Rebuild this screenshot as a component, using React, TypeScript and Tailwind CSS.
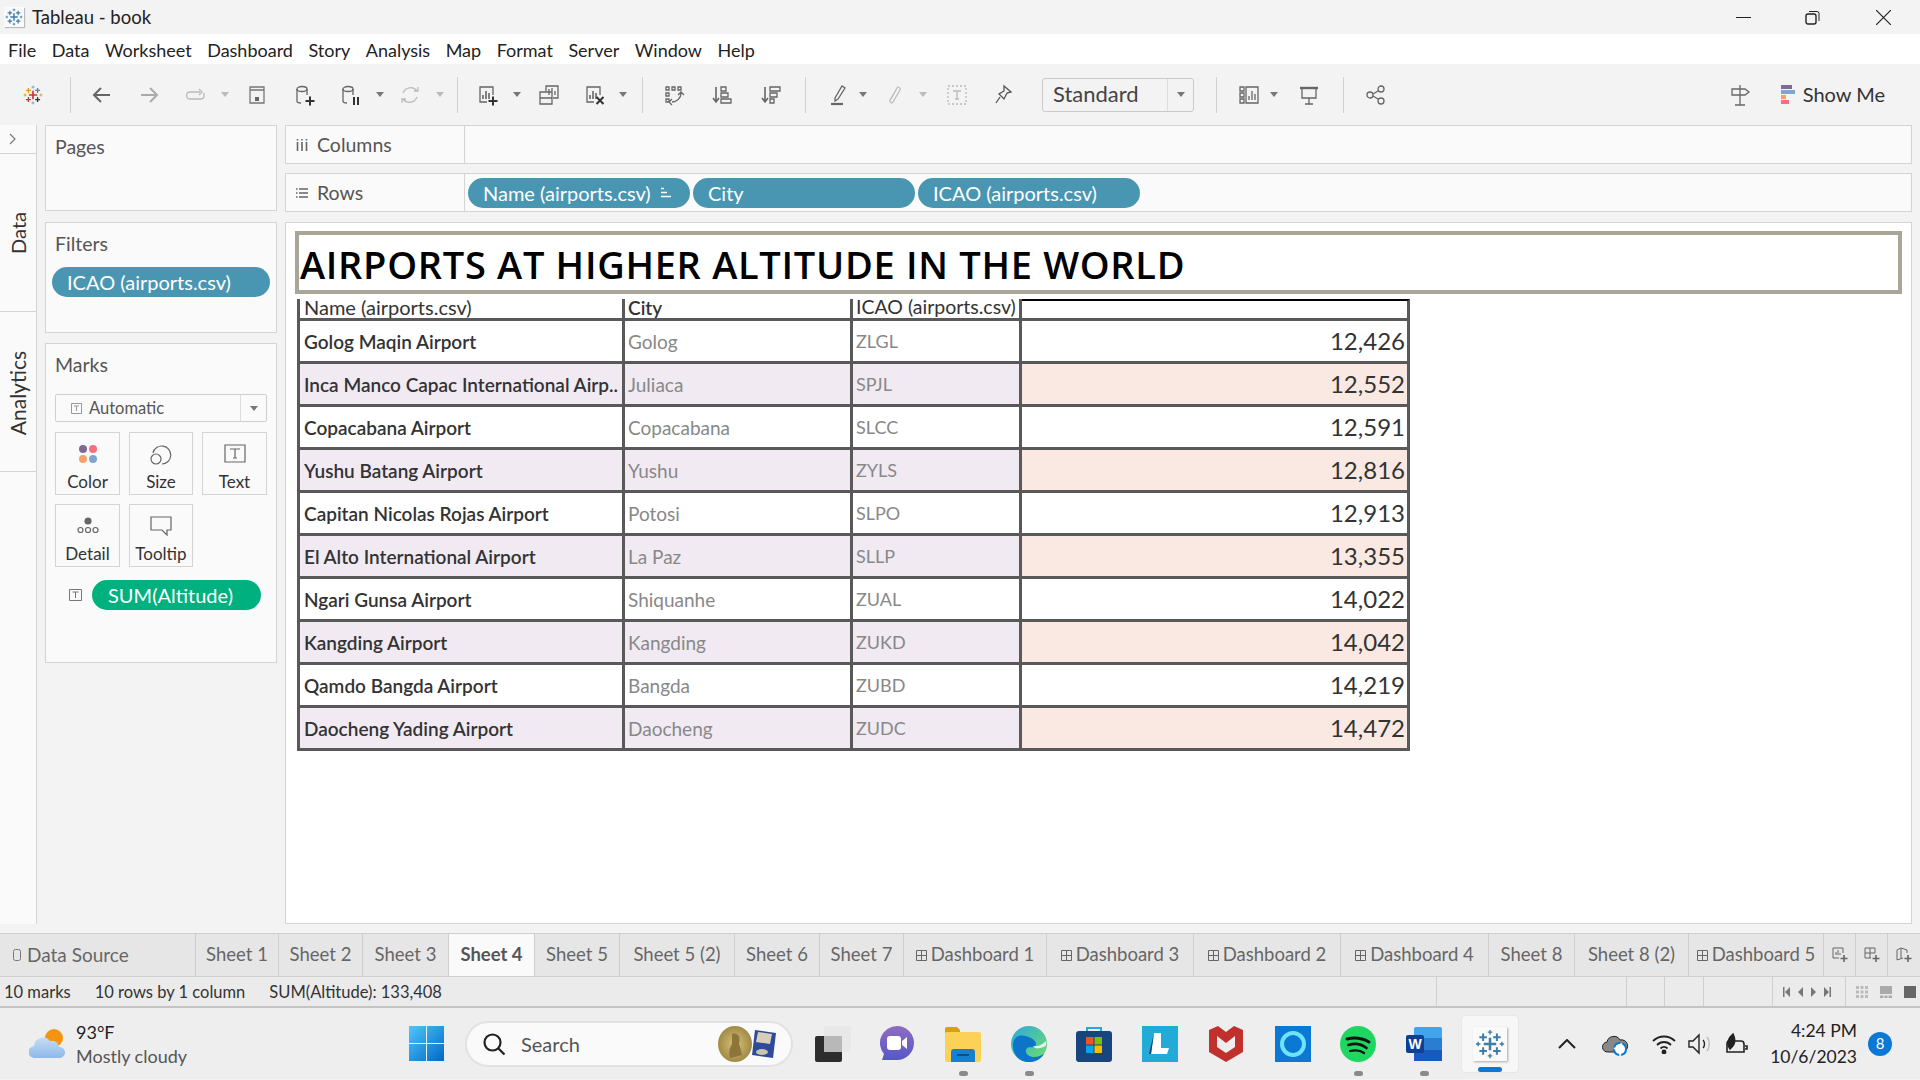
import React from "react";

const S = ({ w = 22, h = 22, v = "0 0 22 22", c = "", children }: any) => (
  <svg width={w} height={h} viewBox={v} fill="none" stroke="#666" strokeWidth={1.3} className={"shrink-0 " + c}>{children}</svg>
);
const Caret = ({ c = "", light = false }: any) => (
  <svg width={8} height={5} viewBox="0 0 8 5" className={"shrink-0 " + c}><path d="M0 0h8L4 5z" fill={light ? "#bbb" : "#777"} /></svg>
);
const Div = ({ c = "" }: any) => <div className={"w-px h-[36px] bg-[#d0d0d0] shrink-0 " + c} />;
const Plus = ({ x, y, s, col, w = 1.6 }: any) => (
  <path d={`M${x - s} ${y}H${x + s}M${x} ${y - s}V${y + s}`} stroke={col} strokeWidth={w} fill="none" />
);
const Logo = ({ size = 22, colors }: any) => {
  const k = colors || ["#3f7ca8", "#3f7ca8", "#3f7ca8", "#3f7ca8", "#3f7ca8", "#3f7ca8", "#3f7ca8"];
  return (
    <svg width={size} height={size} viewBox="0 0 24 24" className="shrink-0">
      <Plus x={12} y={12} s={5} col={k[0]} w={2} />
      <Plus x={6.5} y={6.5} s={3} col={k[1]} />
      <Plus x={17.5} y={6.5} s={3} col={k[2]} />
      <Plus x={6.5} y={17.5} s={3} col={k[3]} />
      <Plus x={17.5} y={17.5} s={3} col={k[4]} />
      <Plus x={12} y={2.5} s={1.8} col={k[5]} w={1.1} />
      <Plus x={12} y={21.5} s={1.8} col={k[5]} w={1.1} />
      <Plus x={2.5} y={12} s={1.8} col={k[6]} w={1.1} />
      <Plus x={21.5} y={12} s={1.8} col={k[6]} w={1.1} />
    </svg>
  );
};
const Cyl = ({ children }: any) => (
  <S>
    <ellipse cx="8" cy="5" rx="5" ry="2.5" />
    <path d="M3 5v12c0 1.2 2 2 4 2M13 5v6" />
    {children}
  </S>
);
const Chart = ({ children }: any) => (
  <S>
    <path d="M10 18H3V3h13v8" />
    <path d="M6 15v-4M9 15V7M12 15v-6" strokeWidth={1.6} />
    {children}
  </S>
);

const menu = ["File", "Data", "Worksheet", "Dashboard", "Story", "Analysis", "Map", "Format", "Server", "Window", "Help"];

const Toolbar = () => (
  <div className="h-[61px] flex items-center bg-[#f3f3f3] pl-[23px] pr-[35px] shrink-0">
    <Logo size={20} colors={["#c9343a", "#e8962b", "#5b879b", "#c9343a", "#333333", "#7b9cc4", "#e8962b"]} />
    <Div c="ml-[27px]" />
    <S c="ml-[20px]"><path d="M19 11H4M10 4l-7 7 7 7" strokeWidth={2} /></S>
    <S c="ml-[25px]"><path d="M3 11h15M12 4l7 7-7 7" stroke="#aaa" strokeWidth={2} /></S>
    <S c="ml-[25px]"><path d="M15 8H5a3 3 0 0 0 0 7h11a3 3 0 0 0 3-3V9M14 5l3 3-3 3" stroke="#bbb" /></S>
    <Caret c="ml-[14px]" light />
    <S c="ml-[17px]"><path d="M4 3h14v16H4zM4 6h14" stroke="#777" /><rect x="9" y="13" width="4" height="4" fill="#666" stroke="none" /></S>
    <div className="ml-[26px]" />
    <Cyl><Plus x={16} y={17} s={4.5} col="#333" w={2} /></Cyl>
    <div className="ml-[24px]" />
    <Cyl><path d="M14 13v8M18 13v8" stroke="#333" strokeWidth={2} /></Cyl>
    <Caret c="ml-[14px]" />
    <S c="ml-[15px]"><path d="M4 9a8 8 0 0 1 14-2M18 13a8 8 0 0 1-14 2M15 7h4V3M7 15H3v4" stroke="#bbb" /></S>
    <Caret c="ml-[15px]" light />
    <Div c="ml-[13px]" />
    <div className="ml-[19px]" />
    <Chart><Plus x={16} y={17} s={4.5} col="#333" w={2} /></Chart>
    <Caret c="ml-[14px]" />
    <S c="ml-[17px]"><path d="M8 7V2h12v12h-5" /><path d="M2 8h12v12H2zM2 14h12M11 11V5M14 11V4M17 11V7" /></S>
    <div className="ml-[24px]" />
    <Chart><path d="M12.5 13l7 7M19.5 13l-7 7" stroke="#333" strokeWidth={2} /></Chart>
    <Caret c="ml-[13px]" />
    <Div c="ml-[15px]" />
    <S c="ml-[20px]"><path d="M3 3h3v3H3zM9 3h3v3H9zM15 3h3v3h-3zM3 9h3v3H3zM3 15h3v3H3zM18 9c0 5-4 9-9 9M15 11l3-3 3 3M9 15l-3 3 3 3" /></S>
    <S c="ml-[26px]"><path d="M5 3v15M2 14l3 4 3-4" strokeWidth={1.6} /><path d="M10 3h5v4h-5zM10 9h7v4h-7zM10 15h10v4H10z" /></S>
    <S c="ml-[27px]"><path d="M5 3v15M2 14l3 4 3-4" strokeWidth={1.6} /><path d="M10 3h10v4H10zM10 9h7v4h-7zM10 15h4v4h-4z" /></S>
    <Div c="ml-[23px]" />
    <S c="ml-[21px]"><path d="M8 14l7-12 3 2-7 11-3 2zM5 20h11" /><path d="M4 20h12" strokeWidth={2.2} /></S>
    <Caret c="ml-[10px]" />
    <S c="ml-[17px]"><path d="M7 15l6-11c1-2 4 0 3 2l-7 12c-1 2-4 0-3-2l6-10" stroke="#bbb" /></S>
    <Caret c="ml-[13px]" light />
    <S c="ml-[19px]"><path d="M2 2h18v18H2z" stroke="#bbb" strokeDasharray="2 2" /><path d="M7 7h8M11 7v8M9 15h4" stroke="#bbb" /></S>
    <S c="ml-[24px]"><path d="M12 2l7 6-4 1-3 6-5-5 5-3zM8 13l-4 6" stroke="#555" /></S>
    <div className="ml-[28px] w-[152px] h-[34px] border border-[#c9c9c9] rounded-[3px] flex items-center shrink-0">
      <span className="flex-1 pl-[10px] pb-[2px] text-[22px] text-[#444]">Standard</span>
      <div className="w-[26px] h-full border-l border-[#dcdcdc] flex items-center justify-center"><Caret /></div>
    </div>
    <Div c="ml-[22px]" />
    <S c="ml-[21px]"><path d="M2 3h4v4H2zM2 9h4v4H2zM2 15h4v4H2zM8 3h12v16H8zM11 16v-4M14 16V7M17 16v-6" /></S>
    <Caret c="ml-[10px]" />
    <S c="ml-[20px]"><path d="M2 4h18" strokeWidth={2.4} /><path d="M4 4v10h14V4M11 14v6M7 20h8" /></S>
    <Div c="ml-[23px]" />
    <S c="ml-[21px]"><circle cx="5" cy="11" r="3" /><circle cx="16" cy="5" r="3" /><circle cx="16" cy="17" r="3" /><path d="M8 10l5-3M8 12l5 3" /></S>
    <S c="ml-auto"><path d="M11 1v20M6 21h10M3 5h13l4 3-4 3H3z" /></S>
    <svg width="14" height="20" viewBox="0 0 14 20" className="ml-[30px] shrink-0">
      <rect width="11" height="4" fill="#7e6a95" /><rect y="5" width="14" height="4" fill="#7fa4ce" /><rect y="10" width="5" height="4" fill="#f2a26d" /><rect y="15" width="8" height="4" fill="#f4707e" />
    </svg>
    <span className="ml-[8px] pb-[2px] text-[20px] text-[#333]">Show Me</span>
  </div>
);

const Pill = ({ text, c = "", children }: any) => (
  <div className={"h-[30px] rounded-[15px] bg-[#4996b2] text-white text-[20px] flex items-center pl-[15px] shrink-0 " + c}>
    <span>{text}</span>{children}
  </div>
);

const Rail = () => (
  <div className="w-[37px] shrink-0 bg-[#fafafa] border-r border-[#d4d4d4] flex flex-col">
    <div className="h-[29px] border-b border-[#d4d4d4] flex items-center justify-center pr-[10px]">
      <svg width="8" height="12" viewBox="0 0 8 12" fill="none" stroke="#777" strokeWidth="1.2"><path d="M1 1l5 5-5 5" /></svg>
    </div>
    <div className="h-[158px] border-b border-[#d4d4d4] flex items-center justify-center">
      <span className="[writing-mode:vertical-rl] rotate-180 text-[20px] text-[#333]">Data</span>
    </div>
    <div className="h-[160px] pt-[4px] border-b border-[#d4d4d4] flex items-center justify-center">
      <span className="[writing-mode:vertical-rl] rotate-180 text-[21px] text-[#333]">Analytics</span>
    </div>
  </div>
);

const Card = ({ label, c = "", children }: any) => (
  <div className={"h-[63px] border border-[#d4d4d4] flex flex-col items-center pt-[7px] text-[17px] text-[#333] " + c}>
    <div className="h-[30px] flex items-center">{children}</div>
    <span className="mt-[2px]">{label}</span>
  </div>
);

const Left = () => (
  <div className="w-[232px] ml-[8px] shrink-0 flex flex-col text-[19.5px] text-[#555]">
    <div className="h-[86px] border border-[#d4d4d4] bg-[#fafafa] pl-[9px] pt-[6px]">Pages</div>
    <div className="h-[111px] mt-[11px] border border-[#d4d4d4] bg-[#fafafa] pt-[6px]">
      <div className="pl-[9px]">Filters</div>
      <Pill text="ICAO (airports.csv)" c="mx-[6px] mt-[9px]" />
    </div>
    <div className="h-[320px] mt-[10px] border border-[#d4d4d4] bg-[#fafafa] pt-[6px] px-[9px]">
      <div>Marks</div>
      <div className="mt-[15px] h-[28px] border border-[#cfcfcf] rounded-[2px] flex items-center text-[16.5px] text-[#555]">
        <div className="flex-1 flex items-center pl-[15px] gap-[7px]">
          <svg width="11" height="11" viewBox="0 0 11 11" fill="none" stroke="#999"><path d="M.5.5h10v10H.5zM3 3h5M5.5 3v5" /></svg>
          <span>Automatic</span>
        </div>
        <div className="w-[26px] h-full border-l border-[#dcdcdc] flex items-center justify-center"><Caret /></div>
      </div>
      <div className="mt-[10px] grid grid-cols-[65px_64px_65px] gap-x-[9px] gap-y-[9px]">
        <Card label="Color">
          <svg width="20" height="20" viewBox="0 0 20 20"><circle cx="5" cy="5" r="4" fill="#7e6a95" /><circle cx="15" cy="5" r="4" fill="#f4707e" /><circle cx="5" cy="15" r="4" fill="#f2a26d" /><circle cx="15" cy="15" r="4" fill="#7fa4ce" /></svg>
        </Card>
        <Card label="Size">
          <svg width="24" height="24" viewBox="0 0 24 24" fill="none" stroke="#666" strokeWidth="1.2"><circle cx="7" cy="17" r="5" /><path d="M4 11a9 9 0 1 1 9 11" /></svg>
        </Card>
        <Card label="Text">
          <svg width="22" height="20" viewBox="0 0 22 20" fill="none" stroke="#666" strokeWidth="1.2"><path d="M1 1h20v17H1zM6 5h10M11 5v9M9 14h4" /></svg>
        </Card>
        <Card label="Detail">
          <svg width="24" height="20" viewBox="0 0 24 20" fill="none" stroke="#666" strokeWidth="1.2"><circle cx="12" cy="5" r="3" fill="#666" /><circle cx="4.5" cy="14" r="2.5" /><circle cx="12" cy="14" r="2.5" /><circle cx="19.5" cy="14" r="2.5" /></svg>
        </Card>
        <Card label="Tooltip">
          <svg width="22" height="20" viewBox="0 0 22 20" fill="none" stroke="#666" strokeWidth="1.2"><path d="M1 1h20v13h-4v5l-5-5H1z" /></svg>
        </Card>
      </div>
      <div className="mt-[13px] flex items-center pl-[14px]">
        <svg width="13" height="12" viewBox="0 0 13 12" fill="none" stroke="#777"><path d="M.5.5h12v11H.5zM3.5 3h6M6.5 3v6" /></svg>
        <div className="ml-[10px] w-[169px] h-[30px] rounded-[15px] bg-[#00b180] text-white text-[20px] flex items-center pl-[16px]">SUM(Altitude)</div>
      </div>
    </div>
  </div>
);

const rows = [
  ["Golog Maqin Airport", "Golog", "ZLGL", "12,426"],
  ["Inca Manco Capac International Airp..", "Juliaca", "SPJL", "12,552"],
  ["Copacabana Airport", "Copacabana", "SLCC", "12,591"],
  ["Yushu Batang Airport", "Yushu", "ZYLS", "12,816"],
  ["Capitan Nicolas Rojas Airport", "Potosi", "SLPO", "12,913"],
  ["El Alto International Airport", "La Paz", "SLLP", "13,355"],
  ["Ngari Gunsa Airport", "Shiquanhe", "ZUAL", "14,022"],
  ["Kangding Airport", "Kangding", "ZUKD", "14,042"],
  ["Qamdo Bangda Airport", "Bangda", "ZUBD", "14,219"],
  ["Daocheng Yading Airport", "Daocheng", "ZUDC", "14,472"],
];

const Table = () => (
  <div className="ml-[2px] mt-[5px] w-[1112px] border-l-[3px] border-[#595959] grid grid-cols-[325px_228px_169px_388px] grid-rows-[22px] auto-rows-[43px] text-[19px] leading-none">
    <div className="border-r-[3px] border-b-[3px] border-[#595959] pl-[4px] pb-[3px] text-[#333] whitespace-nowrap h-[22px] flex items-center text-[20px]">Name (airports.csv)</div>
    <div className="border-r-[3px] border-b-[3px] border-[#595959] pl-[3px] pb-[3px] text-[#333] h-[22px] flex items-center font-semibold">City</div>
    <div className="border-r-[3px] border-b-[3px] border-[#595959] pl-[3px] pb-[3px] text-[#333] text-[19.5px] whitespace-nowrap h-[22px] flex items-center">ICAO (airports.csv)</div>
    <div className="border-r-[3px] border-b-[3px] border-t-2 border-t-black border-[#595959] h-[22px]" />
    {rows.map((r, i) => {
      const odd = i % 2 === 1;
      const lav = odd ? "bg-[#f1eaf3]" : "bg-white";
      return (
        <React.Fragment key={r[2]}>
          <div className={"border-r-[3px] border-b-[3px] border-[#595959] pl-[4px] flex items-center text-[#333] font-semibold whitespace-nowrap overflow-hidden " + lav}>{r[0]}</div>
          <div className={"border-r-[3px] border-b-[3px] border-[#595959] pl-[3px] flex items-center text-[#888] " + lav}>{r[1]}</div>
          <div className={"border-r-[3px] border-b-[3px] border-[#595959] pl-[3px] flex items-center text-[18px] text-[#888] " + lav}>{r[2]}</div>
          <div className={"border-r-[3px] border-b-[3px] border-[#595959] pr-[2px] flex items-center justify-end text-[24px] text-[#333] " + (odd ? "bg-[#f9e9e2]" : "bg-white")}>{r[3]}</div>
        </React.Fragment>
      );
    })}
  </div>
);

const Right = () => (
  <div className="w-[1627px] ml-[8px] shrink-0 flex flex-col text-[19.5px] text-[#555]">
    <div className="h-[39px] border border-[#d4d4d4] bg-[#fafafa] flex">
      <div className="w-[179px] border-r border-[#d4d4d4] flex items-center pl-[10px]">
        <svg width="12" height="12" viewBox="0 0 12 12" stroke="#666" strokeWidth="1.6"><path d="M1.5 3v9M6 3v9M10.5 3v9M1.5 0v1.5M6 0v1.5M10.5 0v1.5" /></svg>
        <span className="ml-[9px]">Columns</span>
      </div>
    </div>
    <div className="h-[39px] mt-[9px] border border-[#d4d4d4] bg-[#fafafa] flex items-center">
      <div className="w-[179px] h-full border-r border-[#d4d4d4] flex items-center pl-[10px]">
        <svg width="12" height="12" viewBox="0 0 12 12" stroke="#666" strokeWidth="1.6"><path d="M0 2h1.5M3 2h9M0 6h1.5M3 6h9M0 10h1.5M3 10h9" /></svg>
        <span className="ml-[9px]">Rows</span>
      </div>
      <Pill text="Name (airports.csv)" c="ml-[3px] w-[222px]">
        <svg width="10" height="11" viewBox="0 0 10 11" stroke="#fff" strokeWidth="1.5" className="ml-[10px]"><path d="M0 1.5h3M0 5.5h6M0 9.5h10" /></svg>
      </Pill>
      <Pill text="City" c="ml-[3px] w-[222px]" />
      <Pill text="ICAO (airports.csv)" c="ml-[3px] w-[222px]" />
    </div>
    <div className="h-[702px] mt-[10px] border border-[#d4d4d4] bg-white pt-[8px] pl-[9px]">
      <div className="w-[1607px] h-[63px] border-[4px] border-[#a9a598] flex items-center pl-[1px] pt-[2px] text-[38px] font-['Open_Sans',sans-serif] font-semibold tracking-[0.7px] text-black leading-none whitespace-nowrap">AIRPORTS AT HIGHER ALTITUDE IN THE WORLD</div>
      <Table />
    </div>
  </div>
);

const GridI = () => (
  <svg width="11" height="11" viewBox="0 0 11 11" fill="none" stroke="#666" className="mr-[4px] shrink-0"><path d="M.5.5h10v10H.5zM5.5.5v10M.5 5.500h10" /></svg>
);
const Tab = ({ t, w, dash, active }: any) => (
  <div className={"h-full border-r border-[#cfcfcf] flex items-center justify-center shrink-0 whitespace-nowrap " + w + (active ? " bg-[#fafafa] font-bold text-[#555]" : " text-[#666]")}>
    {dash && <GridI />}{t}
  </div>
);
const Tabs = () => (
  <div className="h-[44px] mt-[9px] bg-[#e6e6e6] border-y border-[#cfcfcf] flex text-[18.5px] shrink-0 overflow-hidden">
    <div className="w-[196px] h-full border-r border-[#cfcfcf] flex items-center pl-[13px] text-[#666] text-[19px] shrink-0">
      <svg width="8" height="12" viewBox="0 0 8 12" fill="none" stroke="#777" className="mr-[6px]"><rect x=".5" y=".5" width="7" height="11" rx="2" /></svg>Data Source
    </div>
    <Tab t="Sheet 1" w="w-[83px]" />
    <Tab t="Sheet 2" w="w-[84px]" />
    <Tab t="Sheet 3" w="w-[86px]" />
    <Tab t="Sheet 4" w="w-[86px]" active />
    <Tab t="Sheet 5" w="w-[85px]" />
    <Tab t="Sheet 5 (2)" w="w-[115px]" />
    <Tab t="Sheet 6" w="w-[85px]" />
    <Tab t="Sheet 7" w="w-[84px]" />
    <Tab t="Dashboard 1" w="w-[143px]" dash />
    <Tab t="Dashboard 3" w="w-[147px]" dash />
    <Tab t="Dashboard 2" w="w-[147px]" dash />
    <Tab t="Dashboard 4" w="w-[148px]" dash />
    <Tab t="Sheet 8" w="w-[86px]" />
    <Tab t="Sheet 8 (2)" w="w-[114px]" />
    <Tab t="Dashboard 5" w="w-[135px]" dash />
    <div className="w-[32px] h-full border-r border-[#cfcfcf] flex items-center justify-center shrink-0">
      <svg width="16" height="16" viewBox="0 0 16 16" fill="none" stroke="#666"><path d="M7 11H1V1h10v5M4 8V5M6 8V3M8 8V6" /><path d="M12 8v7M8.500 11.500h7" strokeWidth="1.6" /></svg>
    </div>
    <div className="w-[32px] h-full border-r border-[#cfcfcf] flex items-center justify-center shrink-0">
      <svg width="16" height="16" viewBox="0 0 16 16" fill="none" stroke="#666"><path d="M7 11H1V1h10v5M6 1v10M1 6h10" /><path d="M12 8v7M8.500 11.500h7" strokeWidth="1.6" /></svg>
    </div>
    <div className="w-[32px] h-full flex items-center justify-center shrink-0">
      <svg width="16" height="16" viewBox="0 0 16 16" fill="none" stroke="#666"><path d="M7 11L1 13V3l4-2 6 2v3M5 1v10" /><path d="M12 8v7M8.500 11.500h7" strokeWidth="1.6" /></svg>
    </div>
  </div>
);

const StatusCell = ({ w, last, children }: any) => (
  <div className={"h-full flex items-center shrink-0 " + w + (last ? "" : " border-l border-[#cfcfcf]")}>{children}</div>
);
const Status = () => (
  <div className="h-[31px] bg-[#ebebeb] border-b-2 border-[#c4c4c4] flex text-[16.5px] text-[#333] shrink-0">
    <div className="w-[1436px] flex items-center pl-[4px] pt-[2px] shrink-0">
      <span>10 marks</span><span className="ml-[24px]">10 rows by 1 column</span><span className="ml-[24px]">SUM(Altitude): 133,408</span>
    </div>
    <StatusCell w="w-[190px]" />
    <StatusCell w="w-[38px]" />
    <StatusCell w="w-[39px]" />
    <StatusCell w="w-[69px]" />
    <StatusCell w="w-[73px]">
      <svg width="48" height="10" viewBox="0 0 48 10" fill="#777" className="ml-[10px]">
        <path d="M0 0h1.500v10H0zM7 0v10L2 5zM20 0v10l-5-5zM28 0v10l5-5zM41 0v10l5-5zM46.500 0H48v10h-1.500z" />
      </svg>
    </StatusCell>
    <StatusCell w="w-[75px]">
      <svg width="12" height="12" viewBox="0 0 12 12" fill="#bbb" className="ml-[10px]"><path d="M0 0h3v3H0zM4.500 0h3v3h-3zM9 0h3v3H9zM0 4.500h3v3H0zM4.500 4.500h3v3h-3zM9 4.500h3v3H9zM0 9h3v3H0zM4.500 9h3v3h-3zM9 9h3v3H9z" /></svg>
      <svg width="12" height="12" viewBox="0 0 12 12" fill="#aaa" className="ml-[12px]"><path d="M0 0h12v8H0zM0 9.500h3.500V12H0zM4.500 9.500h3V12h-3zM8.500 9.500H12V12H8.500z" /></svg>
      <div className="ml-[12px] w-[12px] h-[12px] bg-[#666]" />
    </StatusCell>
  </div>
);

const TB = ({ c = "", dot, children }: any) => (
  <div className={"relative w-[36px] h-[36px] flex items-center justify-center shrink-0 " + c}>
    {children}
    {dot && <div className="absolute left-[14px] bottom-[-14px] w-[9px] h-[5px] rounded-full bg-[#8a8a8a]" />}
  </div>
);

const Taskbar = () => (
  <div className="h-[71px] bg-[#eeeeee] flex items-center relative shrink-0 text-[#333]">
    <svg width="36" height="30" viewBox="0 0 36 30" className="ml-[29px] shrink-0">
      <defs><linearGradient id="cl" x1="0" y1="0" x2="0" y2="1"><stop offset="0" stopColor="#c7dcf3" /><stop offset="1" stopColor="#8db8ea" /></linearGradient></defs>
      <circle cx="25" cy="9" r="9" fill="#f59412" />
      <path d="M6 29a6 6 0 0 1-1-12 9 9 0 0 1 16-5 7 7 0 0 1 9 6 5.500 5.500 0 0 1 1 11z" fill="url(#cl)" />
    </svg>
    <div className="ml-[11px] w-[124px] leading-[24px] text-[18px] shrink-0">
      <div className="text-[#222]">93°F</div>
      <div className="text-[#555] whitespace-nowrap">Mostly cloudy</div>
    </div>
    <svg width="35" height="35" viewBox="0 0 35 35" className="ml-[209px] shrink-0">
      <defs><linearGradient id="w" x1="0" y1="0" x2="1" y2="1"><stop offset="0" stopColor="#4fc6fb" /><stop offset="1" stopColor="#0069c5" /></linearGradient></defs>
      <path d="M0 0h17v17H0zM18 0h17v17H18zM0 18h17v17H0zM18 18h17v17H18z" fill="url(#w)" />
    </svg>
    <div className="ml-[21px] w-[328px] h-[46px] rounded-[23px] bg-[#fafafa] border-2 border-[#e2e2e2] flex items-center pl-[15px] shrink-0">
      <svg width="24" height="24" viewBox="0 0 24 24" fill="none" stroke="#222" strokeWidth="2.2"><circle cx="10.500" cy="10.500" r="8" /><path d="M16.500 16.500l6 6" /></svg>
      <span className="ml-[15px] text-[20px] text-[#555]">Search</span>
      <svg width="60" height="36" viewBox="0 0 60 36" className="ml-[138px] shrink-0">
        <defs><radialGradient id="g"><stop offset="0" stopColor="#d9c17a" /><stop offset="1" stopColor="#a08a45" /></radialGradient></defs>
        <ellipse cx="17" cy="18" rx="17" ry="18" fill="url(#g)" />
        <path d="M14 8c6-2 9 4 7 9l3 12-12 3c-2-8 1-12 2-14z" fill="#8b7538" />
        <path d="M40 3l21 3-3 25-21-3z" fill="#2e4a9c" transform="translate(-3 1)" />
        <path d="M40 6l14 2-2 10-14-2z" fill="#d8cdb8" />
        <ellipse cx="44" cy="26" rx="6" ry="3" fill="#c9c4b0" />
      </svg>
    </div>
    <svg width="36" height="36" viewBox="0 0 36 36" className="ml-[22px] shrink-0">
      <rect x="0" y="10" width="27" height="26" rx="2" fill="#2d2d2d" />
      <rect x="9" y="0" width="27" height="26" rx="2" fill="#e8e8e8" />
      <rect x="9" y="10" width="18" height="16" fill="#b8b8b8" />
    </svg>
    <TB c="ml-[28px]">
      <svg width="34" height="36" viewBox="0 0 34 36"><defs><linearGradient id="t" x1="0" y1="0" x2="0" y2="1"><stop offset="0" stopColor="#8f6cc0" /><stop offset="1" stopColor="#5558c8" /></linearGradient></defs><path d="M17 0a17 17 0 0 1 0 34H2l2-6A17 17 0 0 1 17 0z" fill="url(#t)" /><rect x="7" y="10" width="14" height="14" rx="3" fill="#fff" /><path d="M22 15l5-4v12l-5-4z" fill="#fff" /></svg>
    </TB>
    <TB c="ml-[30px]" dot>
      <svg width="36" height="36" viewBox="0 0 36 36"><path d="M0 3a2 2 0 0 1 2-2h10l3 3v4H0z" fill="#d8a10a" /><rect y="6" width="36" height="30" rx="2" fill="#fcd158" /><path d="M6 36V26a3 3 0 0 1 3-3h18a3 3 0 0 1 3 3v10z" fill="#1580cf" /><rect x="12" y="28" width="12" height="2" fill="#0a4f8c" /></svg>
    </TB>
    <TB c="ml-[30px]" dot>
      <svg width="36" height="36" viewBox="0 0 36 36"><defs><linearGradient id="e" x1="0" y1="0" x2="1" y2="1"><stop offset="0" stopColor="#2ea8dd" /><stop offset="1" stopColor="#6fe06a" /></linearGradient></defs><circle cx="18" cy="18" r="18" fill="url(#e)" /><path d="M2 20C2 8 12 8 20 12c6 3 6 8 3 9-4 1-7-1-8 3-1 6 8 10 18 4-6 10-20 10-26 4-3-3-5-7-5-12z" fill="#0c74c9" /><path d="M22 20c6 1 10-2 13-5 1 6-2 6-6 7-3 1-6 0-7-2z" fill="#eeeeee" /></svg>
    </TB>
    <TB c="ml-[29px]">
      <svg width="36" height="36" viewBox="0 0 36 36" fill="none"><path d="M11 6V2h14v4" stroke="#28a8e0" strokeWidth="2" /><rect y="5" width="36" height="31" rx="3" fill="#17467f" /><rect x="10" y="11" width="7.500" height="7.500" fill="#f35325" /><rect x="18.500" y="11" width="7.500" height="7.500" fill="#81bc06" /><rect x="10" y="19.500" width="7.500" height="7.500" fill="#05a6f0" /><rect x="18.500" y="19.500" width="7.500" height="7.500" fill="#ffba08" /></svg>
    </TB>
    <TB c="ml-[30px]">
      <svg width="36" height="36" viewBox="0 0 36 36"><rect width="36" height="36" fill="#23abd8" /><path d="M12 7h7v15h8l-2 6H9z" fill="#fff" /><path d="M12 7l-3 21h-2z" fill="#123a7a" /></svg>
    </TB>
    <TB c="ml-[30px]">
      <svg width="34" height="36" viewBox="0 0 34 36"><path d="M0 4l9-4 8 6 8-6 9 4v22l-17 10L0 26z" fill="#c0302c" /><path d="M8 10l9 7 9-7v11l-9 6-9-6z" fill="#eeeeee" /></svg>
    </TB>
    <TB c="ml-[31px]">
      <div className="w-[36px] h-[36px] bg-[#0a78d4] flex items-center justify-center"><div className="w-[26px] h-[26px] rounded-full border-[4px] border-[#6fe3f7]" /></div>
    </TB>
    <TB c="ml-[29px]" dot>
      <svg width="36" height="36" viewBox="0 0 36 36" fill="none" stroke="#111" strokeLinecap="round"><circle cx="18" cy="18" r="18" fill="#1ed760" stroke="none" /><path d="M7 13c8-2 15-1 22 3" strokeWidth="3" /><path d="M8.500 19c6-2 13-1 18 3" strokeWidth="2.600" /><path d="M10 25c5-1 10-1 14 2" strokeWidth="2.200" /></svg>
    </TB>
    <TB c="ml-[30px]" dot>
      <svg width="36" height="36" viewBox="0 0 36 36"><rect x="8" y="1" width="28" height="34" rx="2" fill="#41a5ee" /><rect x="8" y="12" width="28" height="12" fill="#2b7cd3" /><rect x="8" y="24" width="28" height="11" fill="#185abd" /><rect y="9" width="18" height="18" rx="2" fill="#103f91" /><text x="9" y="23" textAnchor="middle" fontSize="14" fontWeight="700" fill="#fff" fontFamily="Liberation Sans">W</text></svg>
    </TB>
    <div className="relative ml-[19px] w-[58px] h-[58px] rounded-[4px] bg-[#f7f7f7] border border-[#e8e8e8] flex items-center justify-center shrink-0">
      <div className="w-[34px] h-[34px] bg-[#fafafa] shadow-[1px_1px_2px_#aaa] flex items-center justify-center"><Logo size={30} /></div>
      <div className="absolute left-[16px] bottom-[0px] w-[24px] h-[5px] rounded-[3px] bg-[#0a78d4]" />
    </div>
    <svg width="18" height="10" viewBox="0 0 18 10" fill="none" stroke="#222" strokeWidth="2" className="ml-[39px] shrink-0"><path d="M1 9l8-8 8 8" /></svg>
    <svg width="26" height="24" viewBox="0 0 26 24" className="ml-[26px] shrink-0"><path d="M6 20a5 5 0 0 1-1-10 7 7 0 0 1 13-2 6 6 0 0 1 3 12z" fill="#888" stroke="#222" /><circle cx="18" cy="17" r="6" fill="#fff" stroke="#0a78d4" strokeWidth="2" strokeDasharray="8 2" /></svg>
    <svg width="24" height="20" viewBox="0 0 24 20" fill="none" stroke="#222" strokeWidth="1.8" className="ml-[24px] shrink-0"><path d="M1 7c6-6 16-6 22 0M5 11c4-4 10-4 14 0M8.500 14.500c2-2 5-2 7 0" /><circle cx="12" cy="18" r="1.500" fill="#222" /></svg>
    <svg width="24" height="22" viewBox="0 0 24 22" fill="none" stroke="#222" strokeWidth="1.4" className="ml-[12px] shrink-0"><path d="M1 8h4l6-6v18l-6-6H1z" /><path d="M15 7c2 2 2 6 0 8" /><path d="M19 4c3 4 3 10 0 14" stroke="#bbb" /></svg>
    <svg width="26" height="22" viewBox="0 0 26 22" fill="none" stroke="#222" strokeWidth="1.6" className="ml-[11px] shrink-0"><path d="M4 19V11c0-2 1-3 2-3h12c2 0 3 1 3 3v8zM22 13h2v3h-2" /><path d="M10 1c-5 4-7 10-3 15 5-4 6-9 3-15z" fill="#222" /></svg>
    <div className="ml-[30px] w-[78px] text-right text-[17.5px] leading-[26px] text-[#222] whitespace-nowrap flex flex-col items-end shrink-0">
      <span>4:24 PM</span><span>10/6/2023</span>
    </div>
    <div className="ml-[11px] w-[24px] h-[24px] rounded-full bg-[#0a78d4] text-white text-[15px] flex items-center justify-center shrink-0">8</div>
  </div>
);

export default function App() {
  return (
    <div className="w-[1920px] h-[1080px] overflow-hidden bg-[#f3f3f3] flex flex-col font-['Lato','Noto_Sans',sans-serif]">
      <div className="h-[34px] flex items-center pl-[4px] shrink-0 bg-[#f3f3f3]">
        <div className="w-[20px] h-[20px] bg-[#fafafa] shadow-[1px_1px_1px_#bbb] flex items-center justify-center"><Logo size={18} /></div>
        <span className="ml-[8px] pt-[1px] text-[18.5px] text-[#222]">Tableau - book</span>
        <div className="ml-auto flex items-center pr-[29px]">
          <div className="w-[15px] h-px bg-[#222]" />
          <svg width="15" height="15" viewBox="0 0 15 15" fill="none" stroke="#222" className="ml-[54px]"><rect x="1" y="4" width="10" height="10" rx="2" strokeWidth="1.4" /><path d="M4 1.500h8a2 2 0 0 1 2 2V11" /></svg>
          <svg width="15" height="15" viewBox="0 0 15 15" fill="none" stroke="#222" strokeWidth="1.2" className="ml-[56px]"><path d="M0 0l15 15M15 0L0 15" /></svg>
        </div>
      </div>
      <div className="h-[30px] bg-white flex items-center pl-[8px] pt-[2px] gap-[15.5px] text-[18px] text-[#222] shrink-0">
        {menu.map((m) => <span key={m}>{m}</span>)}
      </div>
      <Toolbar />
      <div className="h-[799px] flex shrink-0">
        <Rail />
        <Left />
        <Right />
      </div>
      <Tabs />
      <Status />
      <Taskbar />
    </div>
  );
}
